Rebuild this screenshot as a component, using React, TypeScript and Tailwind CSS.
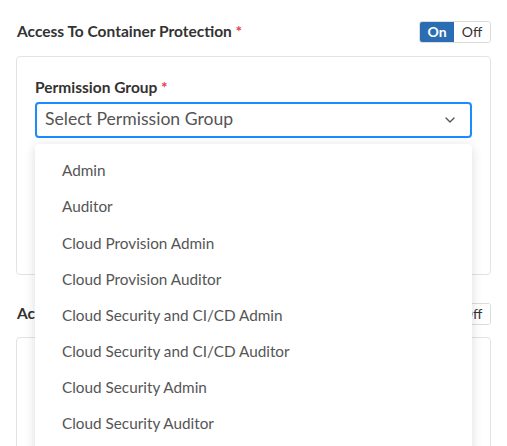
import { ChevronDown } from 'lucide-react'

const groups = [
  'Admin',
  'Auditor',
  'Cloud Provision Admin',
  'Cloud Provision Auditor',
  'Cloud Security and CI/CD Admin',
  'Cloud Security and CI/CD Auditor',
  'Cloud Security Admin',
  'Cloud Security Auditor',
  'Cloud Security Viewer',
]

function Toggle({ on }: { on: boolean }) {
  return (
    <div className="flex h-[22px] overflow-hidden rounded-[3px] border border-[#dcdcdc] text-[14px] leading-none">
      <span
        className={
          on
            ? 'flex w-[34px] items-center justify-center bg-[#2a6db3] font-bold text-white'
            : 'flex w-[34px] items-center justify-center bg-white text-[#333]'
        }
      >
        On
      </span>
      <span className="flex w-[36px] items-center justify-center bg-white text-[#333]">Off</span>
    </div>
  )
}

function SectionHeader({ title }: { title: string }) {
  return (
    <div className="flex items-center justify-between pl-[1px] pr-[16px]">
      <p className="text-[15.5px] font-bold text-[#333]">
        {title} <span className="text-[#e0414f]">*</span>
      </p>
      <Toggle on />
    </div>
  )
}

export default function App() {
  return (
    <div
      className="relative h-[446px] w-[507px] overflow-hidden bg-white pl-[16px] pt-[20px]"
      style={{ fontFamily: 'Lato, "Open Sans", sans-serif' }}
    >
      <SectionHeader title="Access To Container Protection" />
      <div className="mr-[16px] mt-[13px] h-[219px] rounded-[4px] border border-[#e3e3e3] px-[18px] pt-[19px]">
        <p className="text-[15.5px] font-bold text-[#333]">
          Permission Group <span className="text-[#e0414f]">*</span>
        </p>
        <div className="relative mt-[2px]">
          <div className="flex h-[36px] items-center justify-between rounded-[4px] border-2 border-[#1a8cff] pl-[8px] pr-[12px]">
            <span className="text-[17.6px] text-[#555]">Select Permission Group</span>
            <ChevronDown className="h-[16px] w-[16px] text-[#555]" strokeWidth={2} />
          </div>
          <ul className="absolute left-0 right-0 top-[42px] z-10 rounded-[4px] bg-white py-[9px] shadow-[0_2px_12px_rgba(0,0,0,0.14)]">
            {groups.map((g) => (
              <li key={g} className="flex h-[36.2px] items-center pl-[27px] text-[15.3px] text-[#555]">
                {g}
              </li>
            ))}
          </ul>
        </div>
      </div>
      <div className="mt-[27px]">
        <SectionHeader title="Access To Cloud Security Posture" />
      </div>
      <div className="mr-[16px] mt-[11px] h-[219px] rounded-[4px] border border-[#e3e3e3]" />
    </div>
  )
}
